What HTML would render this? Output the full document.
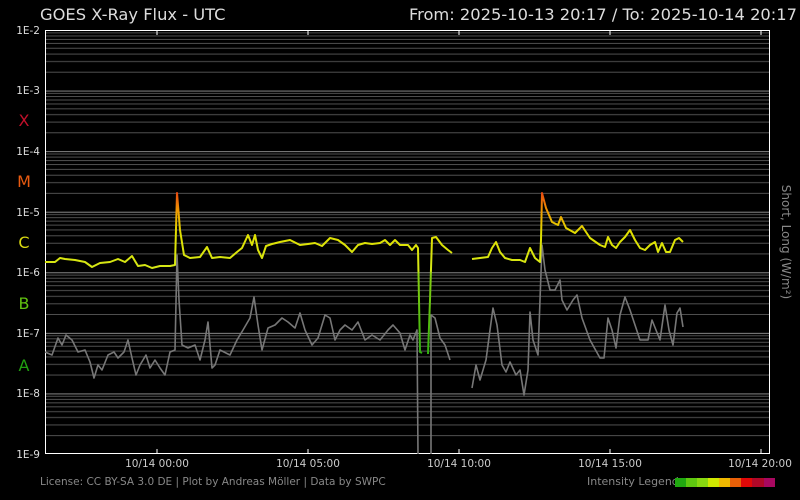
<!DOCTYPE html>
<html><head><style>
body{margin:0;background:#000;width:800px;height:500px;overflow:hidden}
svg{display:block}
text{font-family:"DejaVu Sans","Liberation Sans",sans-serif}
</style></head><body>
<svg width="800" height="500" viewBox="0 0 800 500">
<defs>
<pattern id="g" patternUnits="userSpaceOnUse" x="45" y="30" width="725" height="60.57">
<g stroke="#505050" stroke-width="1">
<line x1="0" x2="725" y1="2.8" y2="2.8"/><line x1="0" x2="725" y1="5.9" y2="5.9"/>
<line x1="0" x2="725" y1="9.4" y2="9.4"/><line x1="0" x2="725" y1="13.4" y2="13.4"/>
<line x1="0" x2="725" y1="18.2" y2="18.2"/><line x1="0" x2="725" y1="24.1" y2="24.1"/>
<line x1="0" x2="725" y1="31.5" y2="31.5"/><line x1="0" x2="725" y1="42.2" y2="42.2"/>
</g>
<line x1="0" x2="725" y1="0.5" y2="0.5" stroke="#888"/>
</pattern>
<linearGradient id="lc" gradientUnits="userSpaceOnUse" x1="0" y1="193" x2="0" y2="355">
<stop offset="0" stop-color="#e84a10"/><stop offset="0.12" stop-color="#f0a000"/>
<stop offset="0.25" stop-color="#e0e000"/><stop offset="0.48" stop-color="#d4e818"/>
<stop offset="0.5" stop-color="#88d010"/><stop offset="1" stop-color="#30b010"/>
</linearGradient>
</defs>
<text x="40" y="20" fill="#ddd" font-size="16.3">GOES X-Ray Flux - UTC</text>
<text x="797" y="20" fill="#ddd" font-size="16.3" text-anchor="end">From: 2025-10-13 20:17  /  To: 2025-10-14 20:17</text>
<rect x="45" y="30" width="725" height="424" fill="url(#g)"/>
<rect x="45.5" y="30.5" width="724" height="423" fill="none" stroke="#fff"/>
<g stroke="#fff">
<line x1="157" x2="157" y1="30" y2="35"/><line x1="157" x2="157" y1="449" y2="454"/>
<line x1="308" x2="308" y1="30" y2="35"/><line x1="308" x2="308" y1="449" y2="454"/>
<line x1="459" x2="459" y1="30" y2="35"/><line x1="459" x2="459" y1="449" y2="454"/>
<line x1="610" x2="610" y1="30" y2="35"/><line x1="610" x2="610" y1="449" y2="454"/>
<line x1="761" x2="761" y1="30" y2="35"/><line x1="761" x2="761" y1="449" y2="454"/>
</g>
<g fill="#ddd" font-size="10.5" text-anchor="end">
<text x="40" y="34">1E-2</text><text x="40" y="94">1E-3</text><text x="40" y="155">1E-4</text>
<text x="40" y="216">1E-5</text><text x="40" y="276">1E-6</text><text x="40" y="337">1E-7</text>
<text x="40" y="397">1E-8</text><text x="40" y="458">1E-9</text>
</g>
<g font-size="16" text-anchor="middle">
<text x="24" y="126" fill="#c0102a">X</text><text x="24" y="187" fill="#e85a10">M</text>
<text x="24" y="248" fill="#d8d810">C</text><text x="24" y="309" fill="#60c010">B</text>
<text x="24" y="371" fill="#20a010">A</text>
</g>
<g fill="#ccc" font-size="10.5" text-anchor="middle">
<text x="157" y="467">10/14 00:00</text><text x="308" y="467">10/14 05:00</text>
<text x="459" y="467">10/14 10:00</text><text x="610" y="467">10/14 15:00</text>
<text x="760" y="467">10/14 20:00</text>
</g>
<text transform="translate(782,242) rotate(90)" fill="#888" font-size="12" text-anchor="middle">Short, Long (W/m²)</text>
<text x="40" y="485" fill="#888" font-size="10.5">License: CC BY-SA 3.0 DE | Plot by Andreas Möller | Data by SWPC</text>
<text x="587" y="485" fill="#888" font-size="11">Intensity Legend</text>
<g>
<rect x="675" y="478" width="11" height="9" fill="#20a810"/><rect x="686" y="478" width="11" height="9" fill="#5ec810"/>
<rect x="697" y="478" width="11" height="9" fill="#88d810"/><rect x="708" y="478" width="11" height="9" fill="#d0e800"/>
<rect x="719" y="478" width="11" height="9" fill="#f0b800"/><rect x="730" y="478" width="11" height="9" fill="#e86008"/>
<rect x="741" y="478" width="11" height="9" fill="#e00808"/><rect x="752" y="478" width="12" height="9" fill="#b00828"/>
<rect x="764" y="478" width="11" height="9" fill="#a80860"/>
</g>
<g fill="none" stroke="#777" stroke-width="1.6" stroke-linejoin="round">
<polyline points="45,352 52,355 58,338 62,345 66,335 72,340 78,352 85,350 90,362 94,378 98,365 102,370 108,355 114,352 118,358 124,352 128,340 132,358 136,375 140,365 146,355 150,368 155,360 160,368 165,375 170,352 175,350 177,255 179,300 182,345 188,348 195,345 200,360 205,340 208,322 212,368 215,365 220,350 230,355 237,340 243,330 250,318 254,297 258,325 262,350 268,328 275,325 282,318 288,322 295,328 300,313 305,330 312,345 318,338 325,315 330,318 335,340 340,330 345,325 352,330 358,322 365,340 372,335 380,340 388,330 393,325 400,333 405,350 410,335 413,340 417,330 418,454"/>
<polyline points="431,454 431,315 435,318 440,338 445,345 450,360"/>
<polyline points="472,388 476,365 480,380 486,360 490,330 493,308 497,325 502,365 506,372 510,362 516,375 520,370 524,395 528,370 530,312 533,340 538,355 542,245 545,270 550,290 555,290 560,280 562,300 567,310 573,300 577,295 582,318 590,340 600,358 604,358 608,318 612,330 616,348 620,315 625,297 630,310 640,340 648,340 652,320 656,330 660,340 665,305 669,330 673,345 677,313 680,308 683,327"/>
</g>
<g fill="none" stroke="url(#lc)" stroke-width="2" stroke-linejoin="round">
<polyline points="45,262 55,262 60,258 65,259 75,260 85,262 92,267 100,263 110,262 118,259 125,262 132,256 138,266 145,265 152,268 160,266 170,266 175,265 177,193 180,230 184,255 190,258 200,257 207,247 212,258 220,257 230,258 237,252 242,248 248,235 252,245 255,235 258,250 262,258 266,246 272,244 280,242 290,240 300,245 308,244 315,243 322,246 330,238 338,240 345,245 352,252 358,245 365,243 372,244 380,243 385,240 390,245 395,240 400,245 408,245 412,250 416,245 418,248 419,300 420,352 422,353"/>
<polyline points="428,354 430,300 432,238 436,237 442,245 448,250 452,253"/>
<polyline points="472,259 480,258 488,257 492,248 496,242 500,252 505,258 512,260 520,260 525,262 530,248 535,258 540,262 541,240 542,193 546,208 552,222 558,225 561,217 566,228 575,233 582,226 590,238 600,245 605,247 608,237 612,245 616,248 620,242 625,237 630,230 635,240 640,248 645,250 650,245 655,242 658,252 662,243 666,252 670,252 675,240 679,238 683,242"/>
</g>
</svg>
</body></html>
